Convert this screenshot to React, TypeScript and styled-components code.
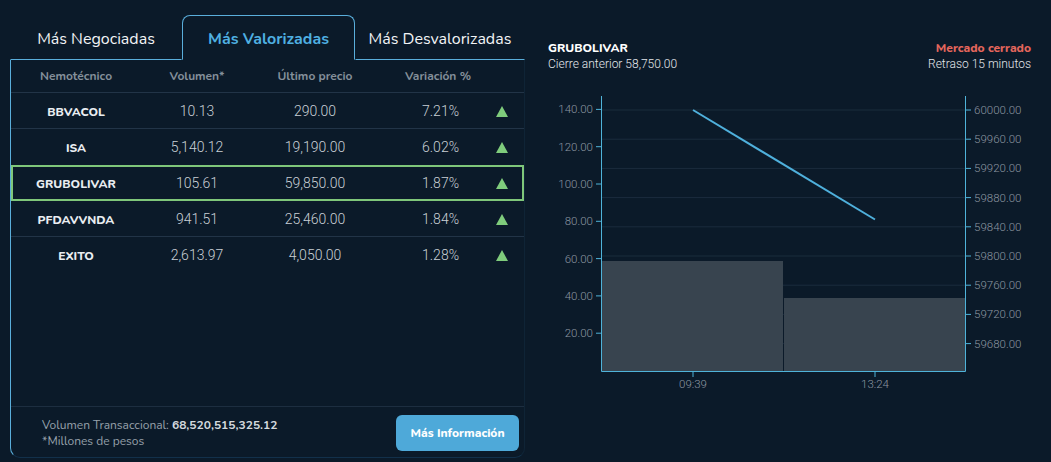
import React from "react";
import styled, { createGlobalStyle } from "styled-components";

const Global = createGlobalStyle`
  html, body { margin: 0; padding: 0; background: #0b1a29; }
  body { font-family: "Nunito", "Lato", "Noto Sans", sans-serif; color: #fff; }
`;

const Page = styled.div`
  width: 1051px;
  height: 462px;
  background: #0b1a29;
  display: flex;
  overflow: hidden;
`;

const LeftCol = styled.div`
  width: 515px;
  flex: none;
  padding: 15px 5px 4px 10px;
  display: flex;
  flex-direction: column;
`;

const Tabs = styled.div`
  display: grid;
  grid-template-columns: 172px 173px 1fr;
  height: 44px;
`;

const Tab = styled.div<{ $active?: boolean }>`
  display: flex;
  align-items: center;
  justify-content: center;
  padding-top: 2px;
  font-size: 16px;
  white-space: nowrap;
  font-weight: ${(p) => (p.$active ? 700 : 400)};
  color: ${(p) => (p.$active ? "#4fb0e2" : "#f2f4f6")};
  border: 1px solid ${(p) => (p.$active ? "#5aaedb" : "transparent")};
  border-bottom: ${(p) => (p.$active ? "1px solid #0b1a29" : "1px solid #5aaedb")};
  border-radius: ${(p) => (p.$active ? "8px 8px 0 0" : "0")};
  margin-bottom: -1px;
  position: relative;
  z-index: 1;
  background: #0b1a29;
`;

const Panel = styled.div`
  flex: 1;
  display: flex;
  flex-direction: column;
  border: 1px solid;
  border-top: none;
  border-color: transparent #0f2436 #12304a #5aaedb;
  border-radius: 0 0 10px 10px;
`;

const Grid = styled.div<{ $header?: boolean; $selected?: boolean; $line?: boolean }>`
  display: grid;
  grid-template-columns: 130px 112px 124px 122px 1fr;
  align-items: center;
  height: ${(p) => (p.$header ? "34px" : "36px")};
  box-sizing: border-box;
  border-bottom: 1px solid ${(p) => (p.$line ? "#223447" : "transparent")};
  ${(p) =>
    p.$selected &&
    `outline: 2px solid #7fc77a; outline-offset: -2px; border-bottom-color: transparent;`}
`;

const HeadCell = styled.div`
  text-align: center;
  font-size: 12px;
  font-weight: 700;
  color: #848f9a;
  padding-top: 1px;
`;

const Ticker = styled.div`
  text-align: center;
  font-size: 12px;
  font-weight: 800;
  color: #e9edf1;
  padding-top: 2px;
`;

const Num = styled.div<{ $right?: boolean }>`
  font-family: "Roboto", "Liberation Sans", sans-serif;
  font-size: 14px;
  font-weight: 300;
  color: #c9d0d6;
  text-align: ${(p) => (p.$right ? "right" : "center")};
  padding-right: ${(p) => (p.$right ? "40px" : "0")};
`;

const Up = styled.span`
  width: 0;
  height: 0;
  margin-left: -3px;
  margin-top: 2px;
  border-left: 6.5px solid transparent;
  border-right: 6.5px solid transparent;
  border-bottom: 11px solid #7fcc7c;
`;

const Spacer = styled.div`
  flex: 1;
`;

const Footer = styled.div`
  border-top: 1px solid #1d2e40;
  display: flex;
  align-items: center;
  justify-content: space-between;
  padding: 8px 5px 6px 31px;
`;

const FootText = styled.div`
  font-size: 12px;
  line-height: 16px;
  color: #97a1ab;
  b { color: #d4d9de; font-weight: 700; }
`;

const Button = styled.button`
  width: 123px;
  height: 36px;
  border: none;
  border-radius: 6px;
  background: #4ea9d9;
  color: #fff;
  font-family: "Nunito", "Lato", sans-serif;
  font-weight: 800;
  font-size: 12px;
`;

const RightCol = styled.div`
  width: 521px;
  min-width: 0;
  flex: none;
  box-sizing: border-box;
  display: flex;
  flex-direction: column;
  padding: 40px 20px 0 18px;
`;

const InfoRow = styled.div`
  display: flex;
  justify-content: space-between;
  font-size: 12px;
  line-height: 16px;
`;

const InfoBlock = styled.div<{ $right?: boolean }>`
  display: flex;
  flex-direction: column;
  align-items: ${(p) => (p.$right ? "flex-end" : "flex-start")};
`;

const Strong = styled.span<{ $red?: boolean }>`
  font-weight: 800;
  color: ${(p) => (p.$red ? "#e4665c" : "#ffffff")};
`;

const Light = styled.span`
  font-family: "Roboto", "Liberation Sans", sans-serif;
  font-weight: 300;
  color: #e3e7eb;
`;

const ChartBox = styled.div`
  margin: 14px -20px 0 -18px;
`;

const rows = [
  ["BBVACOL", "10.13", "290.00", "7.21%"],
  ["ISA", "5,140.12", "19,190.00", "6.02%"],
  ["GRUBOLIVAR", "105.61", "59,850.00", "1.87%"],
  ["PFDAVVNDA", "941.51", "25,460.00", "1.84%"],
  ["EXITO", "2,613.97", "4,050.00", "1.28%"],
];

const leftTicks = [140, 120, 100, 80, 60, 40, 20];
const rightTicks = [60000, 59960, 59920, 59880, 59840, 59800, 59760, 59720, 59680];

const Chart = () => {
  const yL = (v: number) => 284.5 - v * 1.865;
  const yR = (v: number) => 24 + ((60000 - v) / 40) * 29.2;
  const axis = "#4fb3d9";
  const label = "#8d97a1";
  return (
    <svg width={521} height={320} viewBox="0 0 521 320">
      {rightTicks.map((t) => (
        <line key={"g" + t} x1={72} x2={435} y1={yR(t)} y2={yR(t)} stroke="#1b2c3d" strokeWidth={1} />
      ))}
      <rect x={72} y={175} width={181} height={110} fill="#38444f" />
      <rect x={254} y={212} width={181} height={73} fill="#38444f" />
      <line x1={163} y1={yR(60000)} x2={345} y2={yR(59850)} stroke="#4fb0dc" strokeWidth={2} />
      <line x1={71.5} x2={71.5} y1={10} y2={285.5} stroke={axis} strokeWidth={1} />
      <line x1={435.5} x2={435.5} y1={10} y2={285.5} stroke={axis} strokeWidth={1} />
      <line x1={71.5} x2={435.5} y1={285.5} y2={285.5} stroke={axis} strokeWidth={1} />
      {leftTicks.map((t) => (
        <g key={"l" + t}>
          <line x1={66} x2={71.5} y1={yL(t)} y2={yL(t)} stroke={axis} />
          <text x={63} y={yL(t) + 4} textAnchor="end" fontSize={11.5} fill={label} fontFamily="Roboto, 'Liberation Sans', sans-serif" fontWeight={300}>
            {t.toFixed(2)}
          </text>
        </g>
      ))}
      {rightTicks.map((t) => (
        <g key={"r" + t}>
          <line x1={435.5} x2={441} y1={yR(t)} y2={yR(t)} stroke={axis} />
          <text x={444} y={yR(t) + 4} textAnchor="start" fontSize={11.5} fill={label} fontFamily="Roboto, 'Liberation Sans', sans-serif" fontWeight={300}>
            {t.toFixed(2)}
          </text>
        </g>
      ))}
      {[
        [163, "09:39"],
        [345, "13:24"],
      ].map(([x, s]) => (
        <g key={s as string}>
          <line x1={x as number} x2={x as number} y1={285.5} y2={291} stroke={axis} />
          <text x={x as number} y={302} textAnchor="middle" fontSize={11.5} fill={label} fontFamily="Roboto, 'Liberation Sans', sans-serif" fontWeight={300}>
            {s}
          </text>
        </g>
      ))}
    </svg>
  );
};

export default function App() {
  return (
    <Page>
      <Global />
      <LeftCol>
        <Tabs>
          <Tab>Más Negociadas</Tab>
          <Tab $active>Más Valorizadas</Tab>
          <Tab>Más Desvalorizadas</Tab>
        </Tabs>
        <Panel>
          <Grid $header $line>
            <HeadCell>Nemotécnico</HeadCell>
            <HeadCell>Volumen*</HeadCell>
            <HeadCell>Último precio</HeadCell>
            <HeadCell>Variación %</HeadCell>
            <div />
          </Grid>
          {rows.map((r, i) => (
            <Grid key={r[0]} $selected={i === 2} $line={i !== 1 && i !== 2 && i !== 4}>
              <Ticker>{r[0]}</Ticker>
              <Num>{r[1]}</Num>
              <Num>{r[2]}</Num>
              <Num $right>{r[3]}</Num>
              <Up />
            </Grid>
          ))}
          <Spacer />
          <Footer>
            <FootText>
              Volumen Transaccional: <b>68,520,515,325.12</b>
              <br />
              *Millones de pesos
            </FootText>
            <Button>Más Información</Button>
          </Footer>
        </Panel>
      </LeftCol>
      <RightCol>
        <InfoRow>
          <InfoBlock>
            <Strong>GRUBOLIVAR</Strong>
            <Light>Cierre anterior 58,750.00</Light>
          </InfoBlock>
          <InfoBlock $right>
            <Strong $red>Mercado cerrado</Strong>
            <Light>Retraso 15 minutos</Light>
          </InfoBlock>
        </InfoRow>
        <ChartBox>
          <Chart />
        </ChartBox>
      </RightCol>
    </Page>
  );
}
